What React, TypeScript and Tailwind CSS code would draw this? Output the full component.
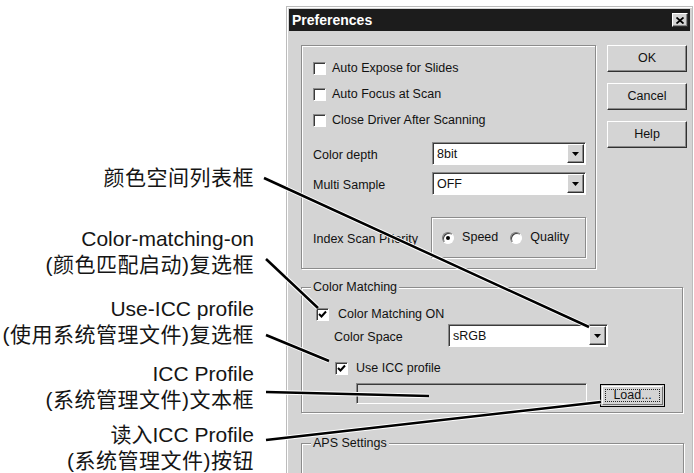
import React from "react";

const raised =
  "border border-t-white border-l-white border-r-[#303030] border-b-[#303030] shadow-[inset_-1px_-1px_0_#8a8a8a]";
const sunken =
  "border border-t-[#8a8a8a] border-l-[#8a8a8a] border-r-white border-b-white shadow-[inset_1px_1px_0_#3a3a3a]";
const etched = "border border-[#8c8c8c] shadow-[1px_1px_0_#fff,inset_1px_1px_0_#fff]";

const CheckBox: React.FC<{ checked?: boolean }> = ({ checked }) => (
  <span className={`w-[13px] h-[13px] shrink-0 bg-white flex items-center justify-center ${sunken}`}>
    {checked && (
      <svg width="9" height="9" viewBox="0 0 9 9">
        <path d="M1 4 L3.5 6.5 L8 1.5" fill="none" stroke="#000" strokeWidth="2" />
      </svg>
    )}
  </span>
);

const Radio: React.FC<{ checked?: boolean }> = ({ checked }) => (
  <span className="w-[12px] h-[12px] rounded-full bg-white flex items-center justify-center border border-t-[#7a7a7a] border-l-[#7a7a7a] border-r-white border-b-white shadow-[inset_1px_1px_0_#404040]">
    {checked && <span className="w-[4px] h-[4px] rounded-full bg-black" />}
  </span>
);

const Select: React.FC<{ value: string; className?: string }> = ({ value, className }) => (
  <div className={`flex h-[23px] bg-white p-[1px] ${sunken} ${className ?? ""}`}>
    <span className="flex-1 pl-[3px] pt-[1px] leading-[18px]">{value}</span>
    <span className={`w-[17px] h-full bg-[#d4d4d4] flex items-center justify-center ${raised}`}>
      <svg width="7" height="4" viewBox="0 0 7 4">
        <path d="M0 0 H7 L3.5 4 Z" fill="#000" />
      </svg>
    </span>
  </div>
);

const Button: React.FC<{ label: string }> = ({ label }) => (
  <div className={`h-[27px] w-full bg-[#d4d4d4] flex items-center justify-center ${raised}`}>{label}</div>
);

const Dialog: React.FC = () => (
  <div className="mt-[6px] w-[407px] h-[470px] shrink-0 bg-[#d4d4d4] border border-[#bcbcbc] p-[2px] text-[12.5px] text-[#111] shadow-[inset_1px_1px_0_#fff]">
    {/* Title bar */}
    <div className="h-[22px] bg-[#1c1c1c] flex items-center justify-between pl-[3px] pr-[2px]">
      <span className="text-white font-bold text-[14px]">Preferences</span>
      <span className={`w-[16px] h-[14px] bg-[#d4d4d4] flex items-center justify-center ${raised}`}>
        <svg width="8" height="7" viewBox="0 0 8 7">
          <path d="M0.5 0.5 L7.5 6.5 M7.5 0.5 L0.5 6.5" stroke="#000" strokeWidth="1.8" />
        </svg>
      </span>
    </div>

    <div className="pl-[12px] pt-[14px]">
      <div className="flex gap-[11px]">
        {/* General group */}
        <div className={`w-[295px] h-[224px] pl-[11px] pr-[9px] pt-[9px] ${etched}`}>
          {["Auto Expose for Slides", "Auto Focus at Scan", "Close Driver After Scanning"].map((t) => (
            <div key={t} className="h-[26px] flex items-center gap-[6px]">
              <CheckBox />
              <span>{t}</span>
            </div>
          ))}
          <div className="mt-[9px] flex items-center">
            <span className="w-[119px] pt-[3px]">Color depth</span>
            <Select value="8bit" className="w-[154px]" />
          </div>
          <div className="mt-[7px] flex items-center">
            <span className="w-[119px] pt-[3px]">Multi Sample</span>
            <Select value="OFF" className="w-[154px]" />
          </div>
          <div className="mt-[22px] flex items-center">
            <span className="w-[119px] pt-[4px]">Index Scan Priority</span>
            <div className={`w-[156px] h-[41px] flex items-center pl-[10px] ${etched}`}>
              <Radio checked />
              <span className="ml-[8px] mr-[12px]">Speed</span>
              <Radio />
              <span className="ml-[8px]">Quality</span>
            </div>
          </div>
        </div>

        {/* Buttons */}
        <div className="w-[80px] flex flex-col gap-[11px]">
          <Button label="OK" />
          <Button label="Cancel" />
          <Button label="Help" />
        </div>
      </div>

      {/* Color Matching */}
      <div className={`relative mt-[18px] w-[382px] h-[126px] ${etched}`}>
        <span className="absolute -top-[9px] left-[9px] px-[2px] bg-[#d4d4d4] leading-[16px]">Color Matching</span>
        <div className="pl-[14px] pt-[18px] flex items-center gap-[9px] h-[34px]">
          <CheckBox checked />
          <span>Color Matching ON</span>
        </div>
        <div className="mt-[2px] pl-[32px] flex items-center">
          <span className="w-[114px] pt-[3px]">Color Space</span>
          <Select value="sRGB" className="w-[160px]" />
        </div>
        <div className="mt-[14px] pl-[33px] flex items-center gap-[8px] h-[15px]">
          <CheckBox checked />
          <span>Use ICC profile</span>
        </div>
        <div className="mt-[7px] pl-[54px] flex items-start gap-[13px]">
          <div className={`w-[231px] h-[21px] bg-[#d4d4d4] ${sunken}`} />
          <div className="mt-[1px] w-[65px] h-[23px] border border-black bg-[#d4d4d4] p-[1px]">
            <div className="h-full border border-t-white border-l-white border-r-[#707070] border-b-[#707070] p-[2px]">
              <div className="h-full border border-dotted border-[#222] flex items-center justify-center leading-none">
                Load...
              </div>
            </div>
          </div>
        </div>
      </div>

      {/* APS Settings */}
      <div className={`relative mt-[30px] w-[383px] h-[60px] ${etched}`}>
        <span className="absolute -top-[9px] left-[9px] px-[2px] bg-[#d4d4d4] leading-[16px]">APS Settings</span>
      </div>
    </div>
  </div>
);

const App: React.FC = () => {
  const lines: [number, number, number, number][] = [
    [264, 178, 589, 327],
    [266, 259, 318, 308],
    [266, 335, 329, 361],
    [266, 392, 429, 396],
    [266, 440, 601, 402],
  ];

  return (
    <div className="relative w-[694px] h-[473px] overflow-hidden bg-white flex font-['Liberation_Sans','Noto_Sans_CJK_SC',sans-serif]">
      {/* Callout labels */}
      <div className="w-[286px] shrink-0 flex flex-col items-end pr-[32px] pt-[165px] text-[21px] leading-[26px] text-[#151515] text-right">
        <div className="tracking-[0.5px]">颜色空间列表框</div>
        <div className="mt-[35px]">
          <div>Color-matching-on</div>
          <div className="tracking-[0.5px]">(颜色匹配启动)复选框</div>
        </div>
        <div className="mt-[18px]">
          <div>Use-ICC profile</div>
          <div className="tracking-[0.5px]">(使用系统管理文件)复选框</div>
        </div>
        <div className="mt-[13px]">
          <div>ICC Profile</div>
          <div className="tracking-[0.5px]">(系统管理文件)文本框</div>
        </div>
        <div className="mt-[9px]">
          <div>读入ICC Profile</div>
          <div className="tracking-[0.5px]">(系统管理文件)按钮</div>
        </div>
      </div>

      <Dialog />

      {/* Leader lines */}
      <svg className="absolute inset-0 pointer-events-none" width="694" height="473" viewBox="0 0 694 473">
        {lines.map(([x1, y1, x2, y2], i) => (
          <g key={i}>
            <line x1={x1} y1={y1} x2={x2} y2={y2} stroke="#fff" strokeWidth="4.5" />
            <line x1={x1} y1={y1} x2={x2} y2={y2} stroke="#000" strokeWidth="2.5" />
          </g>
        ))}
      </svg>
    </div>
  );
};

export default App;
